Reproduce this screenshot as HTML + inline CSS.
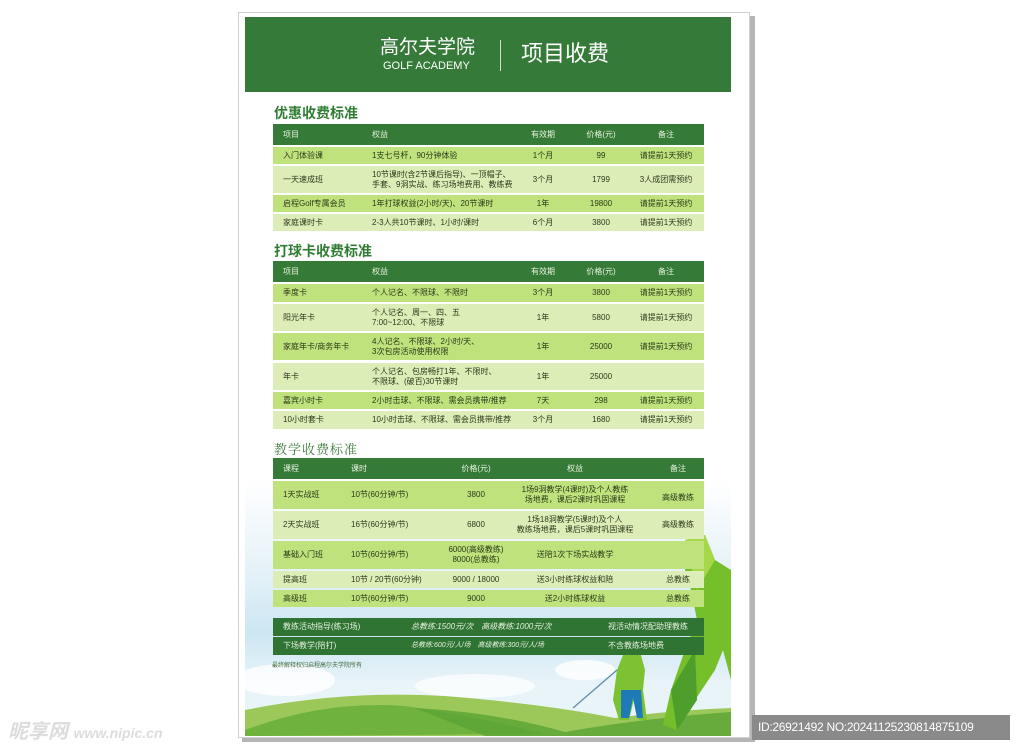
<!DOCTYPE html>
<html><head><meta charset="utf-8"><style>
*{margin:0;padding:0;box-sizing:border-box}
body{width:1024px;height:755px;background:#fff;position:relative;overflow:hidden;font-family:"Liberation Sans","Noto Sans CJK SC",sans-serif;color:#2a3a1a}
.abs{position:absolute}
.r{position:absolute;left:273px;width:431px}
.r span{position:absolute;font-size:8px;line-height:10px;white-space:nowrap}
.h{background:#367a37;color:#fff}
.h span{color:#e8f3e0}
.a{background:#bfe27c}
.b{background:#dcedb8}
.t{position:absolute;left:274px;font-size:14px;font-weight:bold;color:#2f7d32}
.c{text-align:center;transform:translateX(-50%)}
.d{background:#2f7433;color:#e6f0e0}
</style></head><body>
<div class="abs" style="left:242px;top:16px;width:513px;height:726px;background:#b5b5b5"></div>
<div class="abs" style="left:238px;top:12px;width:512px;height:726px;background:#fff;border:1px solid #cfcfcf"></div>
<div class="abs" style="left:245px;top:480px;width:486px;height:256px;background:linear-gradient(#fff 0%,#e6f2f8 35%,#cde6f3 60%,#e9f4f8 80%)"></div>
<svg class="abs" style="left:245px;top:530px" width="486" height="206" viewBox="0 0 486 206">
<ellipse cx="40" cy="150" rx="50" ry="16" fill="#fff" opacity=".8"/>
<ellipse cx="230" cy="156" rx="60" ry="12" fill="#fff" opacity=".7"/>
<ellipse cx="340" cy="140" rx="30" ry="10" fill="#fff" opacity=".8"/>
<path d="M0 180 Q100 160 200 166 Q300 174 370 188 Q430 180 486 178 L486 206 L0 206Z" fill="#9cc85a"/>
<path d="M0 200 Q80 170 160 176 Q240 188 300 204 L0 206Z" fill="#6fb23e"/>
<path d="M170 178 Q250 182 320 202 Q400 188 486 182 L486 206 L240 206Z" fill="#5aa436" opacity=".8"/>
<!-- small golfer -->
<path d="M368 170 L372 140 L380 120 L386 112 L394 118 L400 140 L398 160 L402 190 L394 190 L390 165 L384 190 L374 190Z" fill="#7cc232"/>
<path d="M376 160 L396 160 L398 188 L392 188 L388 168 L384 188 L376 188Z" fill="#1f7ab8"/>
<line x1="328" y1="178" x2="372" y2="140" stroke="#5b8aa5" stroke-width="1.2"/>
<!-- big figure -->
<path d="M418 195 L426 160 L440 120 L452 90 L446 60 L440 40 L440 10 L460 5 L470 30 L486 40 L486 150 L478 120 L470 140 L450 170 L432 200Z" fill="#74bf2a"/>
<path d="M440 10 L460 5 L470 30 L452 60Z" fill="#a6d94a"/>
<path d="M426 160 L450 120 L452 170 L432 200Z" fill="#4d9e2a"/>
</svg>
<div class="abs" style="left:245px;top:17px;width:486px;height:75px;background:#367a39"></div>
<div class="abs" style="left:380px;top:37px;color:#fff;font-size:19px;line-height:22px">高尔夫学院</div>
<div class="abs" style="left:383px;top:60px;color:#fff;font-size:11px;line-height:12px">GOLF ACADEMY</div>
<div class="abs" style="left:500px;top:40px;width:1px;height:31px;background:#cfe0cf"></div>
<div class="abs" style="left:521px;top:40px;color:#fff;font-size:22px;line-height:28px">项目收费</div>

<div class="t" style="top:103px">优惠收费标准</div>
<div class="r h" style="top:124px;height:21px"><span style="left:10px;top:6px">项目</span><span style="left:99px;top:6px">权益</span><span class="c" style="left:270px;top:6px">有效期</span><span class="c" style="left:328px;top:6px">价格(元)</span><span class="c" style="left:393px;top:6px">备注</span></div>
<div class="r a" style="top:147px;height:17px"><span style="left:10px;top:4px">入门体验课</span><span style="left:99px;top:4px">1支七号杆，90分钟体验</span><span class="c" style="left:270px;top:4px">1个月</span><span class="c" style="left:328px;top:4px">99</span><span class="c" style="left:393px;top:4px">请提前1天预约</span></div>
<div class="r b" style="top:166px;height:27px"><span style="left:10px;top:9px">一天速成班</span><span style="left:99px;top:4px">10节课时(含2节课后指导)、一顶帽子、<br>手套、9洞实战、练习场地费用、教练费</span><span class="c" style="left:270px;top:9px">3个月</span><span class="c" style="left:328px;top:9px">1799</span><span class="c" style="left:393px;top:9px">3人成团需预约</span></div>
<div class="r a" style="top:195px;height:17px"><span style="left:10px;top:4px">启程Golf专属会员</span><span style="left:99px;top:4px">1年打球权益(2小时/天)、20节课时</span><span class="c" style="left:270px;top:4px">1年</span><span class="c" style="left:328px;top:4px">19800</span><span class="c" style="left:393px;top:4px">请提前1天预约</span></div>
<div class="r b" style="top:214px;height:17px"><span style="left:10px;top:4px">家庭课时卡</span><span style="left:99px;top:4px">2-3人共10节课时、1小时/课时</span><span class="c" style="left:270px;top:4px">6个月</span><span class="c" style="left:328px;top:4px">3800</span><span class="c" style="left:393px;top:4px">请提前1天预约</span></div>

<div class="t" style="top:241px">打球卡收费标准</div>
<div class="r h" style="top:261px;height:21px"><span style="left:10px;top:6px">项目</span><span style="left:99px;top:6px">权益</span><span class="c" style="left:270px;top:6px">有效期</span><span class="c" style="left:328px;top:6px">价格(元)</span><span class="c" style="left:393px;top:6px">备注</span></div>
<div class="r a" style="top:284px;height:18px"><span style="left:10px;top:4px">季度卡</span><span style="left:99px;top:4px">个人记名、不限球、不限时</span><span class="c" style="left:270px;top:4px">3个月</span><span class="c" style="left:328px;top:4px">3800</span><span class="c" style="left:393px;top:4px">请提前1天预约</span></div>
<div class="r b" style="top:304px;height:27px"><span style="left:10px;top:9px">阳光年卡</span><span style="left:99px;top:4px">个人记名、周一、四、五<br>7:00~12:00、不限球</span><span class="c" style="left:270px;top:9px">1年</span><span class="c" style="left:328px;top:9px">5800</span><span class="c" style="left:393px;top:9px">请提前1天预约</span></div>
<div class="r a" style="top:333px;height:27px"><span style="left:10px;top:9px">家庭年卡/商务年卡</span><span style="left:99px;top:4px">4人记名、不限球、2小时/天、<br>3次包房活动使用权限</span><span class="c" style="left:270px;top:9px">1年</span><span class="c" style="left:328px;top:9px">25000</span><span class="c" style="left:393px;top:9px">请提前1天预约</span></div>
<div class="r b" style="top:363px;height:27px"><span style="left:10px;top:9px">年卡</span><span style="left:99px;top:4px">个人记名、包房畅打1年、不限时、<br>不限球、(破百)30节课时</span><span class="c" style="left:270px;top:9px">1年</span><span class="c" style="left:328px;top:9px">25000</span></div>
<div class="r a" style="top:392px;height:17px"><span style="left:10px;top:4px">嘉宾小时卡</span><span style="left:99px;top:4px">2小时击球、不限球、需会员携带/推荐</span><span class="c" style="left:270px;top:4px">7天</span><span class="c" style="left:328px;top:4px">298</span><span class="c" style="left:393px;top:4px">请提前1天预约</span></div>
<div class="r b" style="top:411px;height:18px"><span style="left:10px;top:4px">10小时套卡</span><span style="left:99px;top:4px">10小时击球、不限球、需会员携带/推荐</span><span class="c" style="left:270px;top:4px">3个月</span><span class="c" style="left:328px;top:4px">1680</span><span class="c" style="left:393px;top:4px">请提前1天预约</span></div>

<div class="abs" style="left:274px;top:439px;font-size:13px;color:#3c7a3c;font-family:'Noto Serif CJK SC',serif;letter-spacing:1px">教学收费标准</div>
<div class="r h" style="top:458px;height:21px"><span style="left:10px;top:6px">课程</span><span style="left:78px;top:6px">课时</span><span class="c" style="left:203px;top:6px">价格(元)</span><span class="c" style="left:302px;top:6px">权益</span><span class="c" style="left:405px;top:6px">备注</span></div>
<div class="r a" style="top:481px;height:28px"><span style="left:10px;top:9px">1天实战班</span><span style="left:78px;top:9px">10节(60分钟/节)</span><span class="c" style="left:203px;top:9px">3800</span><span class="c" style="left:302px;top:4px;text-align:center">1场9洞教学(4课时)及个人教练<br>场地费，课后2课时巩固课程</span><span class="c" style="left:405px;top:12px">高级教练</span></div>
<div class="r b" style="top:511px;height:28px"><span style="left:10px;top:9px">2天实战班</span><span style="left:78px;top:9px">16节(60分钟/节)</span><span class="c" style="left:203px;top:9px">6800</span><span class="c" style="left:302px;top:4px;text-align:center">1场18洞教学(5课时)及个人<br>教练场地费，课后5课时巩固课程</span><span class="c" style="left:405px;top:9px">高级教练</span></div>
<div class="r a" style="top:541px;height:28px"><span style="left:10px;top:9px">基础入门班</span><span style="left:78px;top:9px">10节(60分钟/节)</span><span class="c" style="left:203px;top:4px;text-align:center">6000(高级教练)<br>8000(总教练)</span><span class="c" style="left:302px;top:9px">送陪1次下场实战教学</span></div>
<div class="r b" style="top:571px;height:17px"><span style="left:10px;top:4px">提高班</span><span style="left:78px;top:4px">10节 / 20节(60分钟)</span><span class="c" style="left:203px;top:4px">9000 / 18000</span><span class="c" style="left:302px;top:4px">送3小时练球权益和陪</span><span class="c" style="left:405px;top:4px">总教练</span></div>
<div class="r a" style="top:590px;height:17px"><span style="left:10px;top:4px">高级班</span><span style="left:78px;top:4px">10节(60分钟/节)</span><span class="c" style="left:203px;top:4px">9000</span><span class="c" style="left:302px;top:4px">送2小时练球权益</span><span class="c" style="left:405px;top:4px">总教练</span></div>

<div class="r d" style="top:618px;height:18px"><span style="left:10px;top:4px">教练活动指导(练习场)</span><span style="left:138px;top:4px;font-style:italic">总教练:1500元/次　高级教练:1000元/次</span><span style="left:335px;top:4px">视活动情况配助理教练</span></div>
<div class="r d" style="top:637px;height:18px"><span style="left:10px;top:4px">下场教学(陪打)</span><span style="left:138px;top:4px;font-style:italic;font-size:7px">总教练:600元/人/场　高级教练:300元/人/场</span><span style="left:335px;top:4px">不含教练场地费</span></div>
<div class="abs" style="left:272px;top:660px;font-size:6px;color:#3c6a3c">最终解释权归启程高尔夫学院所有</div>

<div class="abs" style="left:8px;top:715px;font-size:20px;color:#dcdcdc;font-weight:bold;font-style:italic">昵享网 <span style="font-size:14px">www.nipic.cn</span></div>
<div class="abs" style="left:752px;top:715px;width:258px;height:25px;background:#8a8a8a;color:#fff;font-size:12px;line-height:25px;padding-left:6px;letter-spacing:-.3px">ID:26921492 NO:20241125230814875109</div>
</body></html>
